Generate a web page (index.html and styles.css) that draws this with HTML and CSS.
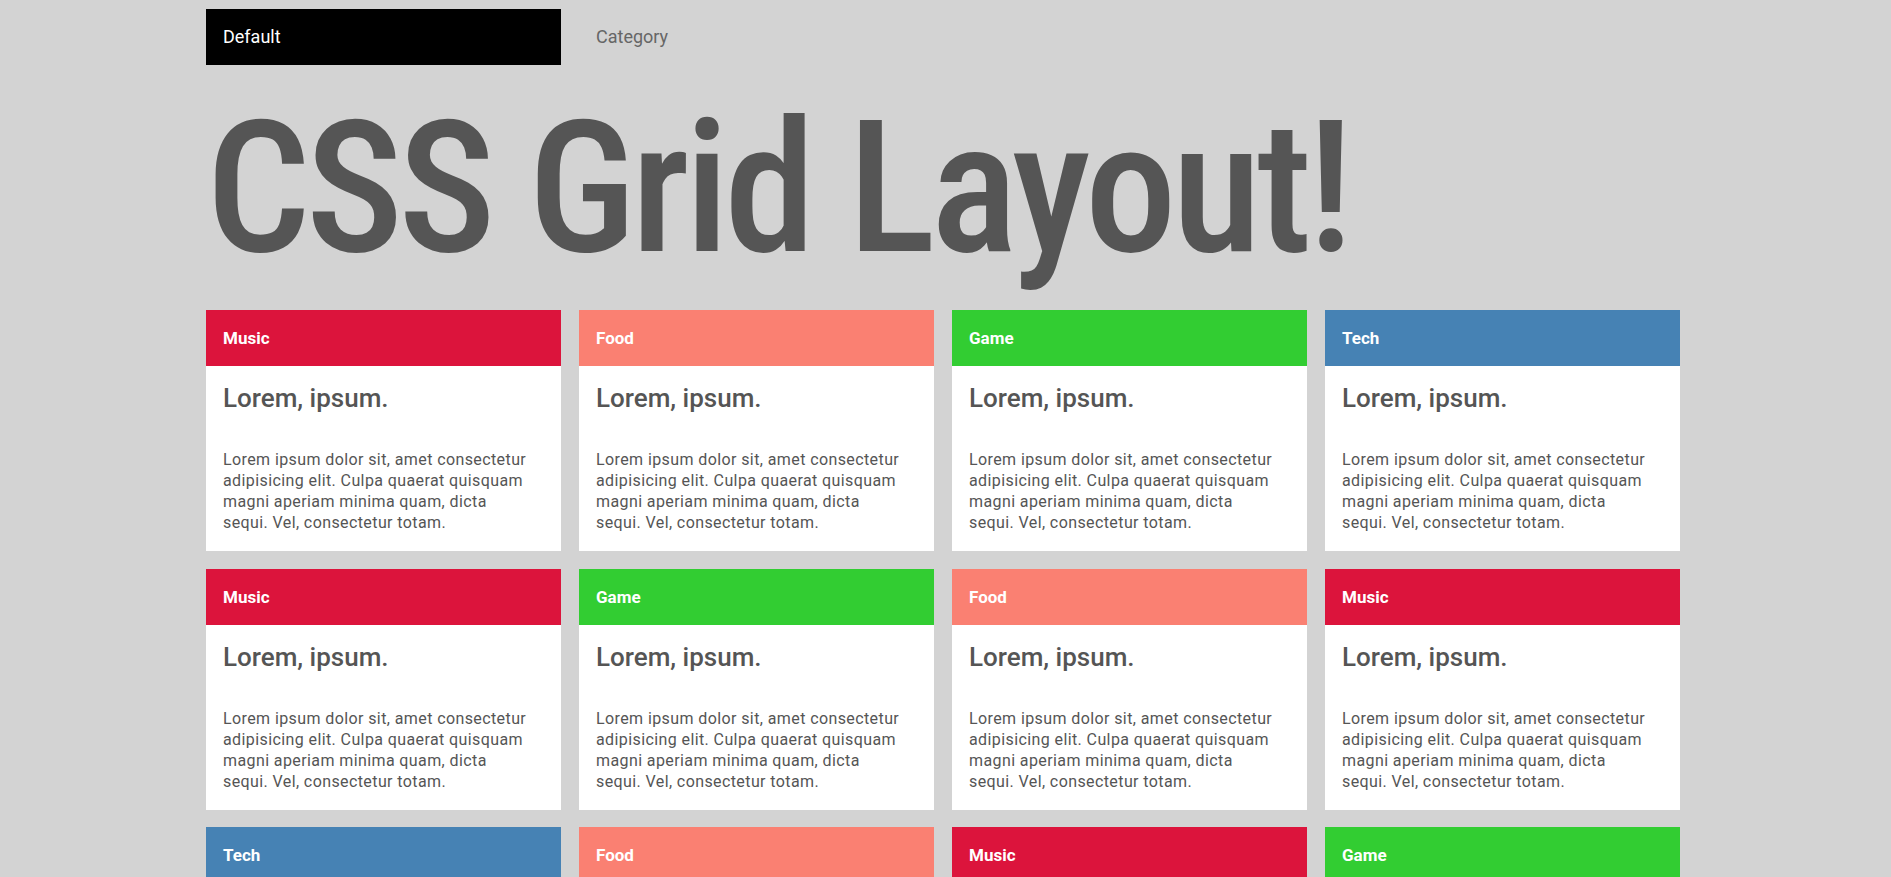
FILE: index.html
```html
<!DOCTYPE html>
<html lang="en">
<head>
<meta charset="utf-8">
<title>CSS Grid Layout!</title>
<link rel="stylesheet" href="styles.css">
</head>
<body>
<div class="page">
  <nav class="nav">
    <a class="nav-link active" href="#">Default</a>
    <a class="nav-link" href="#">Category</a>
  </nav>
  <h1 class="title">CSS Grid Layout!</h1>
  <main class="grid">
    <article class="card"><header class="card-head music">Music</header><div class="card-body"><h2 class="card-title">Lorem, ipsum.</h2><p class="card-text">Lorem ipsum dolor sit, amet consectetur adipisicing elit. Culpa quaerat quisquam magni aperiam minima quam, dicta<br>sequi. Vel, consectetur totam.</p></div></article>
    <article class="card"><header class="card-head food">Food</header><div class="card-body"><h2 class="card-title">Lorem, ipsum.</h2><p class="card-text">Lorem ipsum dolor sit, amet consectetur adipisicing elit. Culpa quaerat quisquam magni aperiam minima quam, dicta<br>sequi. Vel, consectetur totam.</p></div></article>
    <article class="card"><header class="card-head game">Game</header><div class="card-body"><h2 class="card-title">Lorem, ipsum.</h2><p class="card-text">Lorem ipsum dolor sit, amet consectetur adipisicing elit. Culpa quaerat quisquam magni aperiam minima quam, dicta<br>sequi. Vel, consectetur totam.</p></div></article>
    <article class="card"><header class="card-head tech">Tech</header><div class="card-body"><h2 class="card-title">Lorem, ipsum.</h2><p class="card-text">Lorem ipsum dolor sit, amet consectetur adipisicing elit. Culpa quaerat quisquam magni aperiam minima quam, dicta<br>sequi. Vel, consectetur totam.</p></div></article>

    <article class="card"><header class="card-head music">Music</header><div class="card-body"><h2 class="card-title">Lorem, ipsum.</h2><p class="card-text">Lorem ipsum dolor sit, amet consectetur adipisicing elit. Culpa quaerat quisquam magni aperiam minima quam, dicta<br>sequi. Vel, consectetur totam.</p></div></article>
    <article class="card"><header class="card-head game">Game</header><div class="card-body"><h2 class="card-title">Lorem, ipsum.</h2><p class="card-text">Lorem ipsum dolor sit, amet consectetur adipisicing elit. Culpa quaerat quisquam magni aperiam minima quam, dicta<br>sequi. Vel, consectetur totam.</p></div></article>
    <article class="card"><header class="card-head food">Food</header><div class="card-body"><h2 class="card-title">Lorem, ipsum.</h2><p class="card-text">Lorem ipsum dolor sit, amet consectetur adipisicing elit. Culpa quaerat quisquam magni aperiam minima quam, dicta<br>sequi. Vel, consectetur totam.</p></div></article>
    <article class="card"><header class="card-head music">Music</header><div class="card-body"><h2 class="card-title">Lorem, ipsum.</h2><p class="card-text">Lorem ipsum dolor sit, amet consectetur adipisicing elit. Culpa quaerat quisquam magni aperiam minima quam, dicta<br>sequi. Vel, consectetur totam.</p></div></article>

    <article class="card"><header class="card-head tech">Tech</header><div class="card-body"><h2 class="card-title">Lorem, ipsum.</h2><p class="card-text">Lorem ipsum dolor sit, amet consectetur adipisicing elit. Culpa quaerat quisquam magni aperiam minima quam, dicta<br>sequi. Vel, consectetur totam.</p></div></article>
    <article class="card"><header class="card-head food">Food</header><div class="card-body"><h2 class="card-title">Lorem, ipsum.</h2><p class="card-text">Lorem ipsum dolor sit, amet consectetur adipisicing elit. Culpa quaerat quisquam magni aperiam minima quam, dicta<br>sequi. Vel, consectetur totam.</p></div></article>
    <article class="card"><header class="card-head music">Music</header><div class="card-body"><h2 class="card-title">Lorem, ipsum.</h2><p class="card-text">Lorem ipsum dolor sit, amet consectetur adipisicing elit. Culpa quaerat quisquam magni aperiam minima quam, dicta<br>sequi. Vel, consectetur totam.</p></div></article>
    <article class="card"><header class="card-head game">Game</header><div class="card-body"><h2 class="card-title">Lorem, ipsum.</h2><p class="card-text">Lorem ipsum dolor sit, amet consectetur adipisicing elit. Culpa quaerat quisquam magni aperiam minima quam, dicta<br>sequi. Vel, consectetur totam.</p></div></article>
  </main>
</div>
</body>
</html>
```

FILE: styles.css
```css
* { box-sizing: border-box; }

html, body {
  margin: 0;
  padding: 0;
  background: #d3d3d3;
  font-family: Roboto, "Liberation Sans", sans-serif;
  color: #555;
}

.page {
  width: 1474px;
  margin: 0 0 0 206px;
  padding-top: 9px;
}

.nav {
  display: grid;
  grid-template-columns: repeat(4, 355px);
  column-gap: 18px;
}

.nav-link {
  display: flex;
  align-items: center;
  height: 56px;
  padding: 0 17px 2px;
  font-size: 18px;
  color: #666;
  text-decoration: none;
}

.nav-link.active {
  background: #000;
  color: #fff;
}

.title {
  margin: 31px 0 30px 0;
  height: 184px;
  font-size: 184px;
  line-height: 1;
  font-weight: 500;
  font-stretch: 75%;
  color: #555;
  white-space: nowrap;
  letter-spacing: -5px;
}

.grid {
  display: grid;
  grid-template-columns: repeat(4, 355px);
  gap: 17.5px 18px;
}

.card {
  background: #fff;
  height: 241px;
}

.card-head {
  height: 56px;
  display: flex;
  align-items: center;
  padding: 0 17px;
  color: #fff;
  font-weight: 700;
  font-size: 17px;
}

.music { background: #dc143c; }
.food { background: #fa8072; }
.game { background: #32cd32; }
.tech { background: #4682b4; }

.card-body {
  padding: 17px 17px 18px 17px;
}

.card-title {
  margin: 0;
  font-size: 26px;
  font-weight: 500;
  color: #555;
}

.card-text {
  margin: 36px 0 0;
  font-size: 16px;
  line-height: 21px;
  letter-spacing: 0.4px;
  color: #555;
}
```
